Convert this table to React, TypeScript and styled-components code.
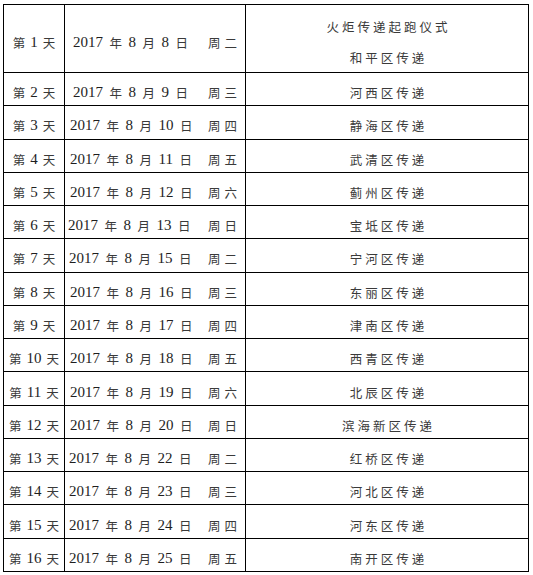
import React from 'react';
import styled, { createGlobalStyle } from 'styled-components';

const GlobalStyle = createGlobalStyle`
  html, body {
    margin: 0;
    padding: 0;
    background: #fff;
  }
`;

type Row = {
  day: number;
  date: number;
  week: string;
  place: string[];
  lead: number;
};

const rows: Row[] = [
  { day: 1, date: 8, week: '二', place: ['火炬传递起跑仪式', '和平区传递'], lead: 8 },
  { day: 2, date: 9, week: '三', place: ['河西区传递'], lead: 8 },
  { day: 3, date: 10, week: '四', place: ['静海区传递'], lead: 5 },
  { day: 4, date: 11, week: '五', place: ['武清区传递'], lead: 5 },
  { day: 5, date: 12, week: '六', place: ['蓟州区传递'], lead: 5 },
  { day: 6, date: 13, week: '日', place: ['宝坻区传递'], lead: 3 },
  { day: 7, date: 15, week: '二', place: ['宁河区传递'], lead: 4 },
  { day: 8, date: 16, week: '三', place: ['东丽区传递'], lead: 5 },
  { day: 9, date: 17, week: '四', place: ['津南区传递'], lead: 5 },
  { day: 10, date: 18, week: '五', place: ['西青区传递'], lead: 5 },
  { day: 11, date: 19, week: '六', place: ['北辰区传递'], lead: 5 },
  { day: 12, date: 20, week: '日', place: ['滨海新区传递'], lead: 5 },
  { day: 13, date: 22, week: '二', place: ['红桥区传递'], lead: 4 },
  { day: 14, date: 23, week: '三', place: ['河北区传递'], lead: 4 },
  { day: 15, date: 24, week: '四', place: ['河东区传递'], lead: 4 },
  { day: 16, date: 25, week: '五', place: ['南开区传递'], lead: 4 },
];

const Table = styled.div`
  display: grid;
  grid-template-columns: 60px 180px 282px;
  grid-template-rows: 67px repeat(15, 32.27px);
  gap: 1px;
  padding: 1px;
  background: #000;
  width: fit-content;
  margin: 4px 0 0 3px;
`;

const Cell = styled.div`
  background: #fff;
  display: flex;
  align-items: center;
  padding-top: 7px;
  box-sizing: border-box;
  font-family: "Liberation Serif", "Noto Sans CJK SC", serif;
  font-size: 15px;
  color: #1e1e1e;
  white-space: nowrap;
  overflow: hidden;
`;

const DayCell = styled(Cell)`
  justify-content: center;
  gap: 5px;
`;

const DateCell = styled(Cell)<{ $lead: number }>`
  justify-content: space-between;
  padding-left: ${p => p.$lead}px;
  padding-right: 8px;
`;

const DatePart = styled.span`
  display: flex;
  align-items: center;
  gap: 6.5px;
`;

const Han = styled.span`
  font-family: "Noto Sans CJK SC", sans-serif;
  font-size: 12.5px;
  color: #3a3a3a;
`;

const Week = styled(Han)`
  letter-spacing: 4px;
  margin-right: -4px;
`;

const PlaceCell = styled(Cell)`
  flex-direction: column;
  justify-content: center;
  font-family: "Noto Sans CJK SC", sans-serif;
  font-size: 12.5px;
  color: #3a3a3a;
  line-height: 31px;
`;

const PlaceLine = styled.div`
  letter-spacing: 3px;
  margin-right: -3px;
`;

export default function App() {
  return (
    <>
      <GlobalStyle />
      <Table>
        {rows.map(r => (
          <React.Fragment key={r.day}>
            <DayCell>
              <Han>第</Han>
              <span>{r.day}</span>
              <Han>天</Han>
            </DayCell>
            <DateCell $lead={r.lead}>
              <DatePart>
                <span>2017</span>
                <Han>年</Han>
                <span>8</span>
                <Han>月</Han>
                <span>{r.date}</span>
                <Han>日</Han>
              </DatePart>
              <Week>周{r.week}</Week>
            </DateCell>
            <PlaceCell>
              {r.place.map(t => (
                <PlaceLine key={t}>{t}</PlaceLine>
              ))}
            </PlaceCell>
          </React.Fragment>
        ))}
      </Table>
    </>
  );
}
